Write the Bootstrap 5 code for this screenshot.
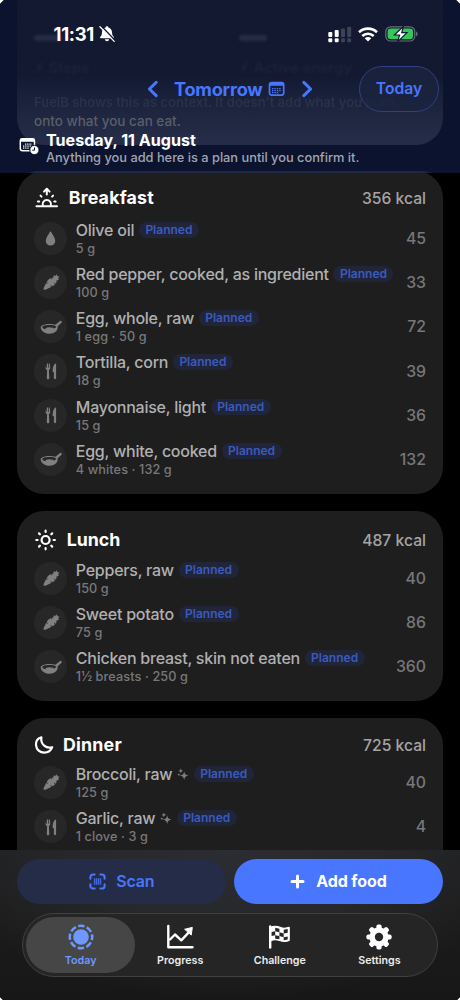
<!DOCTYPE html>
<html lang="en" data-bs-theme="dark">
<head>
<meta charset="utf-8">
<meta name="viewport" content="width=device-width, initial-scale=1">
<title>Meal plan</title>
<link href="https://cdn.jsdelivr.net/npm/bootstrap@5.3.0/dist/css/bootstrap.min.css" rel="stylesheet">
<style>
  body { background:#fff; font-family:"Inter","Liberation Sans",sans-serif; overflow:hidden; }
  svg { display:block; flex:none; }
  .phone { width:460px; height:1000px; background:#000; clip-path:polygon(4px 0,456px 0,460px 4px,460px 997px,457px 1000px,3px 1000px,0 997px,0 4px); }
  .panel { background:#1e1e1e; border-radius:27px; margin:0 17.3px; padding:0 16.7px; }
  .summary { height:145px; margin-bottom:26px; }
  .meal-lunch { margin-top:17.3px; height:189.8px; }
  .meal-dinner { margin-top:17.3px; height:300px; }

  .meal-head { color:#fff; }
  .meal-title { font-size:17.8px; font-weight:700; line-height:22px; letter-spacing:.2px; }
  .meal-total { font-size:15.7px; font-weight:500; color:#a4a4a5; line-height:22px; padding-top:2px; }
  .food { height:44.25px; }
  .disc { width:33.4px; height:33.4px; border-radius:50%; background:#272727; color:#808082; margin-right:8.4px; }
  .food-name { font-size:16px; font-weight:500; line-height:20px; color:#b0b0b1; letter-spacing:-.24px; white-space:nowrap; }
  .food-sub { font-size:12.7px; font-weight:500; line-height:17px; color:#78787b; letter-spacing:.1px; }
  .food-kcal { font-size:15.8px; font-weight:500; color:#77777a; padding-top:1px; }
  .planned { font-size:12px; font-weight:600; line-height:16px; height:16px; border-radius:8px; width:60px; text-align:center; background:#20253a; color:#3b5bbd; margin-left:4.7px; letter-spacing:0; }
  .spark { color:#7c7c7f; margin:1px 0 0 4.7px; }

  .topbar { height:172.6px; color:#fff; background:#0b132e; overflow:hidden; }
  .topbar::after { content:""; position:absolute; left:17.3px; right:17.3px; top:171px; height:40px; border-radius:27px; background:#1f2743; }
  .under { left:17.3px; width:425.4px; top:-30px; height:175px; border-radius:0 0 27px 27px; background:linear-gradient(#11182f 0,#121931 105px,#182039 122px,#242c47 168px); }
  .ghost-bar { width:28px; height:6px; border-radius:3px; background:#262d47; filter:blur(1.5px); top:35px; }
  .ghost { font-weight:600; white-space:nowrap; line-height:18px; }
  .status-time { font-size:18.5px; font-weight:700; line-height:22px; letter-spacing:-.3px; }
  .accent { color:#4876ff; }
  .day-label { font-size:18.2px; font-weight:700; line-height:24px; letter-spacing:-.25px; }
  .today-pill { width:80px; height:46px; border-radius:23px; border:1px solid #2d4282; background:#1b243fd0; font-size:15.7px; font-weight:600; }
  .plan-title { font-size:16.1px; font-weight:700; line-height:19px; }
  .plan-note { font-size:12.8px; font-weight:500; line-height:16px; color:#a2a5ae; }

  .dock { height:150px; bottom:0; background:radial-gradient(ellipse 300px 150px at 50% 0,#2b2d32 0,#27282b 50%,#1b1b1c00 100%), linear-gradient(#1e1e1e,#171717); }
  .act { height:45.4px; border-radius:23px; font-size:16px; font-weight:600; }
  .act-scan { background:#242c47; color:#4876ff; }
  .act-add { background:#4876ff; color:#fff; font-weight:700; }
  .tabs { width:416px; height:64.5px; border-radius:32px; border:1px solid #404041; background:#252525; padding:3px; }
  .tab { width:99.6px; font-size:10.7px; font-weight:600; line-height:13px; color:#ececee; }
  .tab span { margin-top:4px; }
  .tab-on { width:109.4px; height:56.4px; border-radius:28.2px; background:#464646; color:#6f98ff; }
</style>
</head>
<body>
<svg width="0" height="0" class="position-absolute">
  <symbol id="i-drop" viewBox="0 0 20 20"><path fill="currentColor" d="M10 1.800c.5 0 .8.4 1.100 1C12.700 5.800 15.600 9.400 15.600 12.500c0 3.400-2.400 5.600-5.600 5.600s-5.600-2.200-5.600-5.600c0-3.100 2.900-6.700 4.500-9.700.3-.6.6-1 1.100-1z"/></symbol>
  <symbol id="i-carrot" viewBox="0 0 20 20"><path fill="currentColor" d="M2 18.500c-.6-.4-.3-1.400.1-2.400L4.600 11l1.600 1 .4-.4-1.500-1.500c1-1.900 2.400-3.500 4.300-4.300l1.600 1.300.4-.4-1.100-1.200c.9-.4 1.700-.4 2.400-.2-.2-1.400 0-2.500 1-2.900l1.200 1.200c.2-1 .8-1.900 1.700-2l.6 2.100 2 .3c.2.900-.7 1.600-1.700 1.900l1.400.9c-.3 1.200-1.500 1.600-2.900 1.400.3 1.300.1 2.600-.8 3.700l-1.600-1.300-.4.4 1.300 1.500c-.9 1-2 1.700-3.100 2.300l-1.600-1.400-.4.400 1.100 1.400c-2.100 1.200-4.300 2.200-6 3-.9.400-2 .5-2.500.3z"/></symbol>
  <symbol id="i-pan" viewBox="0 0 24 16"><path fill="currentColor" fill-rule="evenodd" d="M16.400 5.700 21 2c1.100-.8 2.400.9 1.500 1.800L18.500 7.500c.2.300.3.700.2 1.100-.5 4-3.600 6.200-8.200 6.200-4.800 0-8-2.400-8.800-6-.4-2.200 3.700-3.900 8.600-3.900 2.400 0 4.600.2 6.100.8zM3.300 8.300c.1 1 1.500 1.600 3 1.900.6-1.300 1.700-2 2.900-1.600 1.200-.7 2.400-.6 3.100.2 1-.5 1.900-.2 2.300.6 1.300-.3 2.500-.8 2.500-1.400-.1-1.200-3-1.900-6.700-1.900-4 0-7.200.9-7.100 2.200z"/></symbol>
  <symbol id="i-fork" viewBox="0 0 14 20"><path fill="currentColor" d="M2.200 2.500v4.300h.7V2.500h1.100v4.300h.7V2.500h1.100l.4 4.600c0 1-.6 1.700-1.300 2.100L5.300 17c0 1.700-2.500 1.700-2.500 0l.3-7.800C2.300 8.800 1.600 8.100 1.600 7.100zM12.100 2.300V17c0 1.600-2.300 1.600-2.300 0l.2-5.500c-1-.3-1.500-.7-1.400-1.600C8.800 6.300 9.800 3 12.100 2.300z"/></symbol>
  <symbol id="i-spark" viewBox="0 0 12 13"><path fill="currentColor" d="M7.200 3.300c.5 2.900 1.400 3.700 4.500 4.300-3.100.6-4 1.500-4.500 4.700-.5-3.200-1.400-4.100-4.500-4.700 3.100-.6 4-1.400 4.500-4.300zM3.800.3c.3 1.700.8 2.200 2.400 2.600-1.600.4-2.100.9-2.400 2.600-.3-1.700-.8-2.200-2.400-2.600C3 2.500 3.500 2 3.800.3zM1.900 5.100c.2 1.100.6 1.400 1.600 1.600-1 .2-1.400.5-1.600 1.600C1.700 7.200 1.300 6.900.3 6.700c1-.2 1.400-.5 1.600-1.600z"/></symbol>
</svg>

<div class="phone position-relative overflow-hidden">
  <main>
    <section class="panel summary"></section>

    <section class="panel" style="height:322.800px">
      <header class="meal-head d-flex align-items-center" style="height:45.100px;padding-top:9px">
        <svg width="26" height="22" viewBox="0 0 26 22" fill="none" stroke="#fff" stroke-width="2" stroke-linecap="round" stroke-linejoin="round"><path d="M2.500 19.200h20.500M8.800 18.500a4.200 4.200 0 1 1 8 0M12.800 7.400V2.200M10 4.600l2.800-2.800 2.800 2.800M3.900 14.400h1.300M20.300 14.400h1.300M6.500 8.600l1 1M19.100 8.600l-1 1"/></svg>
        <span class="meal-title" style="margin-left:8.700px">Breakfast</span>
        <span class="meal-total ms-auto">356 kcal</span>
      </header>
      <div class="food d-flex align-items-center"><span class="disc d-flex align-items-center justify-content-center"><svg width="17" height="17"><use href="#i-drop"/></svg></span><div><div class="food-name d-flex align-items-center">Olive oil<span class="planned">Planned</span></div><div class="food-sub">5 g</div></div><span class="food-kcal ms-auto">45</span></div>
      <div class="food d-flex align-items-center"><span class="disc d-flex align-items-center justify-content-center"><svg width="18" height="18"><use href="#i-carrot"/></svg></span><div><div class="food-name d-flex align-items-center">Red pepper, cooked, as ingredient<span class="planned">Planned</span></div><div class="food-sub">100 g</div></div><span class="food-kcal ms-auto">33</span></div>
      <div class="food d-flex align-items-center"><span class="disc d-flex align-items-center justify-content-center"><svg width="24" height="16"><use href="#i-pan"/></svg></span><div><div class="food-name d-flex align-items-center">Egg, whole, raw<span class="planned">Planned</span></div><div class="food-sub">1 egg · 50 g</div></div><span class="food-kcal ms-auto">72</span></div>
      <div class="food d-flex align-items-center"><span class="disc d-flex align-items-center justify-content-center"><svg width="14" height="20"><use href="#i-fork"/></svg></span><div><div class="food-name d-flex align-items-center">Tortilla, corn<span class="planned">Planned</span></div><div class="food-sub">18 g</div></div><span class="food-kcal ms-auto">39</span></div>
      <div class="food d-flex align-items-center"><span class="disc d-flex align-items-center justify-content-center"><svg width="14" height="20"><use href="#i-fork"/></svg></span><div><div class="food-name d-flex align-items-center">Mayonnaise, light<span class="planned">Planned</span></div><div class="food-sub">15 g</div></div><span class="food-kcal ms-auto">36</span></div>
      <div class="food d-flex align-items-center"><span class="disc d-flex align-items-center justify-content-center"><svg width="24" height="16"><use href="#i-pan"/></svg></span><div><div class="food-name d-flex align-items-center">Egg, white, cooked<span class="planned">Planned</span></div><div class="food-sub">4 whites · 132 g</div></div><span class="food-kcal ms-auto">132</span></div>
    </section>

    <section class="panel meal-lunch">
      <header class="meal-head d-flex align-items-center" style="height:45px;padding-top:12px">
        <svg width="24" height="24" viewBox="0 0 24 24" fill="none" stroke="#fff" stroke-width="2.200" stroke-linecap="round"><circle cx="11.600" cy="12" r="4"/><path d="M11.600 2.700v1.300M11.600 20v1.300M2.300 12h1.300M19.600 12h1.300M5 5.400l.9.900M17.300 17.700l.9.900M18.200 5.400l-.9.900M5.900 17.700l-.9.900"/></svg>
        <span class="meal-title" style="margin-left:8.700px;letter-spacing:0">Lunch</span>
        <span class="meal-total ms-auto">487 kcal</span>
      </header>
      <div class="food d-flex align-items-center"><span class="disc d-flex align-items-center justify-content-center"><svg width="18" height="18"><use href="#i-carrot"/></svg></span><div><div class="food-name d-flex align-items-center">Peppers, raw<span class="planned">Planned</span></div><div class="food-sub">150 g</div></div><span class="food-kcal ms-auto">40</span></div>
      <div class="food d-flex align-items-center"><span class="disc d-flex align-items-center justify-content-center"><svg width="18" height="18"><use href="#i-carrot"/></svg></span><div><div class="food-name d-flex align-items-center">Sweet potato<span class="planned">Planned</span></div><div class="food-sub">75 g</div></div><span class="food-kcal ms-auto">86</span></div>
      <div class="food d-flex align-items-center"><span class="disc d-flex align-items-center justify-content-center"><svg width="24" height="16"><use href="#i-pan"/></svg></span><div><div class="food-name d-flex align-items-center">Chicken breast, skin not eaten<span class="planned">Planned</span></div><div class="food-sub">1½ breasts · 250 g</div></div><span class="food-kcal ms-auto">360</span></div>
    </section>

    <section class="panel meal-dinner">
      <header class="meal-head d-flex align-items-center" style="height:42.100px;padding-top:12px">
        <svg width="20" height="20" viewBox="0 0 20 20" fill="none" stroke="#fff" stroke-width="2.200" stroke-linejoin="round"><path d="M7.400 2.300C3.700 3.400 1.700 6.700 2 10.200c.4 4.600 4 7.500 8.300 7.500 3.700 0 6.600-2 7.900-5.500-5.800 1.800-12-2.600-10.800-9.900z"/></svg>
        <span class="meal-title" style="margin-left:9px">Dinner</span>
        <span class="meal-total ms-auto">725 kcal</span>
      </header>
      <div class="food d-flex align-items-center"><span class="disc d-flex align-items-center justify-content-center"><svg width="18" height="18"><use href="#i-carrot"/></svg></span><div><div class="food-name d-flex align-items-center">Broccoli, raw<svg class="spark" width="12" height="13"><use href="#i-spark"/></svg><span class="planned">Planned</span></div><div class="food-sub">125 g</div></div><span class="food-kcal ms-auto">40</span></div>
      <div class="food d-flex align-items-center"><span class="disc d-flex align-items-center justify-content-center"><svg width="14" height="20"><use href="#i-fork"/></svg></span><div><div class="food-name d-flex align-items-center">Garlic, raw<svg class="spark" width="12" height="13"><use href="#i-spark"/></svg><span class="planned">Planned</span></div><div class="food-sub">1 clove · 3 g</div></div><span class="food-kcal ms-auto">4</span></div>
    </section>
  </main>

  <div class="topbar position-absolute top-0 start-0 w-100">
    <div class="under position-absolute"></div>
    <div class="ghost-bar position-absolute" style="left:34px"></div>
    <div class="ghost-bar position-absolute" style="left:239px"></div>
    <div class="ghost position-absolute" style="left:34px;top:59px;font-size:14.700px;color:#1c243c;filter:blur(1px)">⚡︎ Steps</div>
    <div class="ghost position-absolute" style="left:239px;top:59px;font-size:14.700px;color:#1c243c;filter:blur(1px)">⚡︎ Active energy</div>
    <div class="ghost position-absolute" style="left:34px;top:93px;font-size:13px;color:#2a314a;filter:blur(.7px)">FuelB shows this as context. It doesn't add what you burn</div>
    <div class="ghost position-absolute" style="left:34px;top:112px;font-size:13.500px;font-weight:500;color:#5a5e6b">onto what you can eat.</div>

    <div class="position-relative d-flex flex-column h-100">
      <div class="d-flex align-items-center" style="height:68px;padding:0 42px 0 53.500px">
        <span class="status-time">11:31</span>
        <svg width="18" height="18" viewBox="0 0 18 18" style="margin-left:4px"><path fill="#fff" d="M9 1.300c.9 0 1.300.5 1.400 1.100 2.200.6 3.500 2.300 3.600 4.700.1 2.700.6 3.600 1.700 4.700.5.6.3 1.500-.6 1.500H2.900c-.9 0-1.100-.9-.6-1.500C3.400 10.700 3.900 9.800 4 7.100c.1-2.400 1.400-4.100 3.600-4.700.1-.6.500-1.100 1.400-1.100zM6.800 14.300h4.400c-.2 1.200-1.100 1.900-2.200 1.900s-2-.7-2.200-1.900z"/><path d="M3 .8 17.200 15.500" stroke="#111931" stroke-width="1.500"/><path d="M1.900 1.700 16.200 16.400" stroke="#fff" stroke-width="1.300" stroke-linecap="round"/></svg>
        <svg class="ms-auto" width="24" height="17" viewBox="0 0 24 17"><g fill="#fff"><rect x=".3" y="6" width="4" height="5" rx="1"/><rect x=".3" y="12.300" width="4" height="4" rx="1.200"/><rect x="6.700" y="4" width="4" height="7" rx="1"/><rect x="6.700" y="12.300" width="4" height="4" rx="1.200"/></g><g fill="#3c4257"><rect x="13" y="2.500" width="4" height="8.500" rx="1"/><rect x="13" y="12.300" width="4" height="4" rx="1.200"/><rect x="19.200" y=".8" width="4" height="10.200" rx="1"/><rect x="19.200" y="12.300" width="4" height="4" rx="1.200"/></g></svg>
        <svg width="20" height="15" viewBox="0 0 20 15" style="margin-left:6px" fill="none" stroke="#fff" stroke-width="2.700"><path d="M1 5.300a13 13 0 0 1 18 0M4.300 9a8.300 8.300 0 0 1 11.400 0"/><path fill="#fff" stroke="none" d="M10 14.600 6.700 11.300a4.700 4.700 0 0 1 6.600 0z"/></svg>
        <svg width="34" height="16" viewBox="0 0 34 16" style="margin-left:7.500px;margin-right:-1px"><rect x=".8" y=".8" width="29" height="14.200" rx="4.800" fill="none" stroke="#686d7c" stroke-width="1.200"/><rect x="2.600" y="2.500" width="25.400" height="10.800" rx="3.300" fill="#34c759"/><path d="M31.200 5.500c1.800.5 1.800 4.300 0 4.800z" fill="#777b88"/><path d="M18.500.3 9.400 9h5.200l-1.900 6.600 9.300-8.900h-5.300z" fill="#fff" stroke="#111931" stroke-width="1.200"/></svg>
      </div>
      <div class="d-flex align-items-center accent" style="height:41px;padding-left:147px">
        <svg width="12" height="18" viewBox="0 0 12 18" fill="none" stroke="currentColor" stroke-width="3" stroke-linecap="round" stroke-linejoin="round"><path d="M9.200 2.400 2.400 9l6.800 6.600"/></svg>
        <span class="day-label" style="margin-left:15px">Tomorrow</span>
        <svg width="18" height="16" viewBox="0 0 18 16" style="margin-left:5px"><rect x="1.500" y="1.500" width="14.200" height="12.600" rx="2.200" fill="none" stroke="currentColor" stroke-width="1.700"/><path d="M1.500 3.200h14.200" stroke="currentColor" stroke-width="3"/><path d="M4 7.600h9.500M4 9.700h9.500M4 11.700h6.500" stroke="currentColor" stroke-width="1.200" stroke-dasharray="1.400 1"/></svg>
        <svg width="12" height="18" viewBox="0 0 12 18" style="margin-left:15.500px" fill="none" stroke="currentColor" stroke-width="3" stroke-linecap="round" stroke-linejoin="round"><path d="M2.800 2.400 9.600 9l-6.800 6.600"/></svg>
        <span class="today-pill d-flex align-items-center justify-content-center ms-auto" style="margin-right:21px">Today</span>
      </div>
      <div class="d-flex" style="padding:21.700px 0 0 18.500px">
        <svg width="20" height="18" viewBox="0 0 20 18" style="margin-top:6.800px"><rect x="1.300" y="1.800" width="14.200" height="12" rx="2.200" fill="none" stroke="#fff" stroke-width="1.500"/><path d="M1.300 3.300h14.200" stroke="#fff" stroke-width="3"/><path d="M6 7.200h7M4 9.200h9M4 11.200h6" stroke="#fff" stroke-width="1.200" stroke-dasharray="1.300 .9"/><circle cx="15.400" cy="13" r="4.600" fill="#fff" stroke="#0b1430" stroke-width="1"/><path d="M15.500 10.500V13.200H13.300" fill="none" stroke="#0b1430" stroke-width="1"/></svg>
        <div style="margin-left:7.500px"><div class="plan-title">Tuesday, 11 August</div><div class="plan-note">Anything you add here is a plan until you confirm it.</div></div>
      </div>
    </div>
  </div>

  <div class="dock position-absolute start-0 w-100">
    <div class="d-flex" style="gap:8.500px;padding:8.700px 17.300px 0">
      <div class="act act-scan flex-fill w-50 d-flex align-items-center justify-content-center"><svg width="17" height="17" viewBox="0 0 18 18" fill="none" stroke="currentColor" stroke-width="2.200" stroke-linecap="round"><path d="M1.500 6V4.300a2.800 2.800 0 0 1 2.800-2.800H6M12 1.500h1.700a2.800 2.800 0 0 1 2.800 2.800V6M16.500 12v1.700a2.800 2.800 0 0 1-2.800 2.800H12M6 16.500H4.300a2.800 2.800 0 0 1-2.800-2.800V12"/><path stroke-width="1.500" stroke-linecap="butt" opacity=".8" d="M5.900 5.500v7M8 5.500v7M10.100 5.500v7M12.200 5.500v7"/></svg><span style="margin-left:10.500px;letter-spacing:-.2px">Scan</span></div>
      <div class="act act-add flex-fill w-50 d-flex align-items-center justify-content-center"><svg width="15" height="15" viewBox="0 0 15 15" stroke="#fff" stroke-width="3" stroke-linecap="round"><path d="M7.500 2v11M2 7.500h11"/></svg><span style="margin-left:11px;letter-spacing:-.1px">Add food</span></div>
    </div>
    <div class="tabs mx-auto d-flex align-items-center" style="margin-top:8.700px">
      <div class="tab tab-on d-flex flex-column align-items-center justify-content-center"><svg width="26" height="26" viewBox="0 0 26 26"><circle cx="13" cy="13" r="7.800" fill="currentColor"/><circle cx="13" cy="13" r="11.200" fill="none" stroke="currentColor" stroke-width="2.500" stroke-dasharray="6.400 2.400" stroke-dashoffset="3.200"/></svg><span>Today</span></div>
      <div class="tab d-flex flex-column align-items-center" style="margin-left:-5px"><svg width="28" height="26" viewBox="0 0 28 26" fill="none" stroke="#fff" stroke-width="2.400" stroke-linecap="round" stroke-linejoin="round"><path d="M2.300 2v21.300h24.200"/><path d="m4 15.500 5-5 6.300 5.800L23 8.200"/><path fill="#fff" stroke-width="1" d="m19 5.200 7.300-1.800-1 7.300z"/></svg><span>Progress</span></div>
      <div class="tab d-flex flex-column align-items-center"><svg width="24" height="26" viewBox="0 0 24 26"><path d="M2.200 2.500v21" stroke="#fff" stroke-width="2.400" stroke-linecap="round"/><path d="M2.200 3.600C6 1.500 9 2 12 3.300s5.500 1.400 9.200.1v13c-3.700 1.700-6.500 1.200-9.500.1s-5.700-1.300-9.500.4z" fill="#fff" stroke="#fff" stroke-width="1.200" stroke-linejoin="round"/><path fill="#252525" d="m7.200 3.800 4.200 1v3.400l-4.200-.9zM15.700 5.700l4-.6v3.700l-4 .6zM3.600 8l3.600-.7v3.900l-3.600.7zM11.400 8.200l4.300 1.200v3.800l-4.300-1.200zM7.200 11.200l4.200.8v3.300l-4.200-.6zM15.700 13.200l4-.6v2.900l-4 .7z"/></svg><span>Challenge</span></div>
      <div class="tab d-flex flex-column align-items-center"><svg width="26" height="26" viewBox="0 0 26 26"><g fill="#fff"><rect x="10.400" y=".4" width="5.200" height="25.200" rx="1.800"/><rect x="10.400" y=".4" width="5.200" height="25.200" rx="1.800" transform="rotate(45 13 13)"/><rect x="10.400" y=".4" width="5.200" height="25.200" rx="1.800" transform="rotate(90 13 13)"/><rect x="10.400" y=".4" width="5.200" height="25.200" rx="1.800" transform="rotate(135 13 13)"/><circle cx="13" cy="13" r="9.700"/></g><circle cx="13" cy="13" r="4.200" fill="#252525"/></svg><span>Settings</span></div>
    </div>
  </div>
</div>
<script src="https://cdn.jsdelivr.net/npm/bootstrap@5.3.0/dist/js/bootstrap.bundle.min.js"></script>
</body>
</html>
